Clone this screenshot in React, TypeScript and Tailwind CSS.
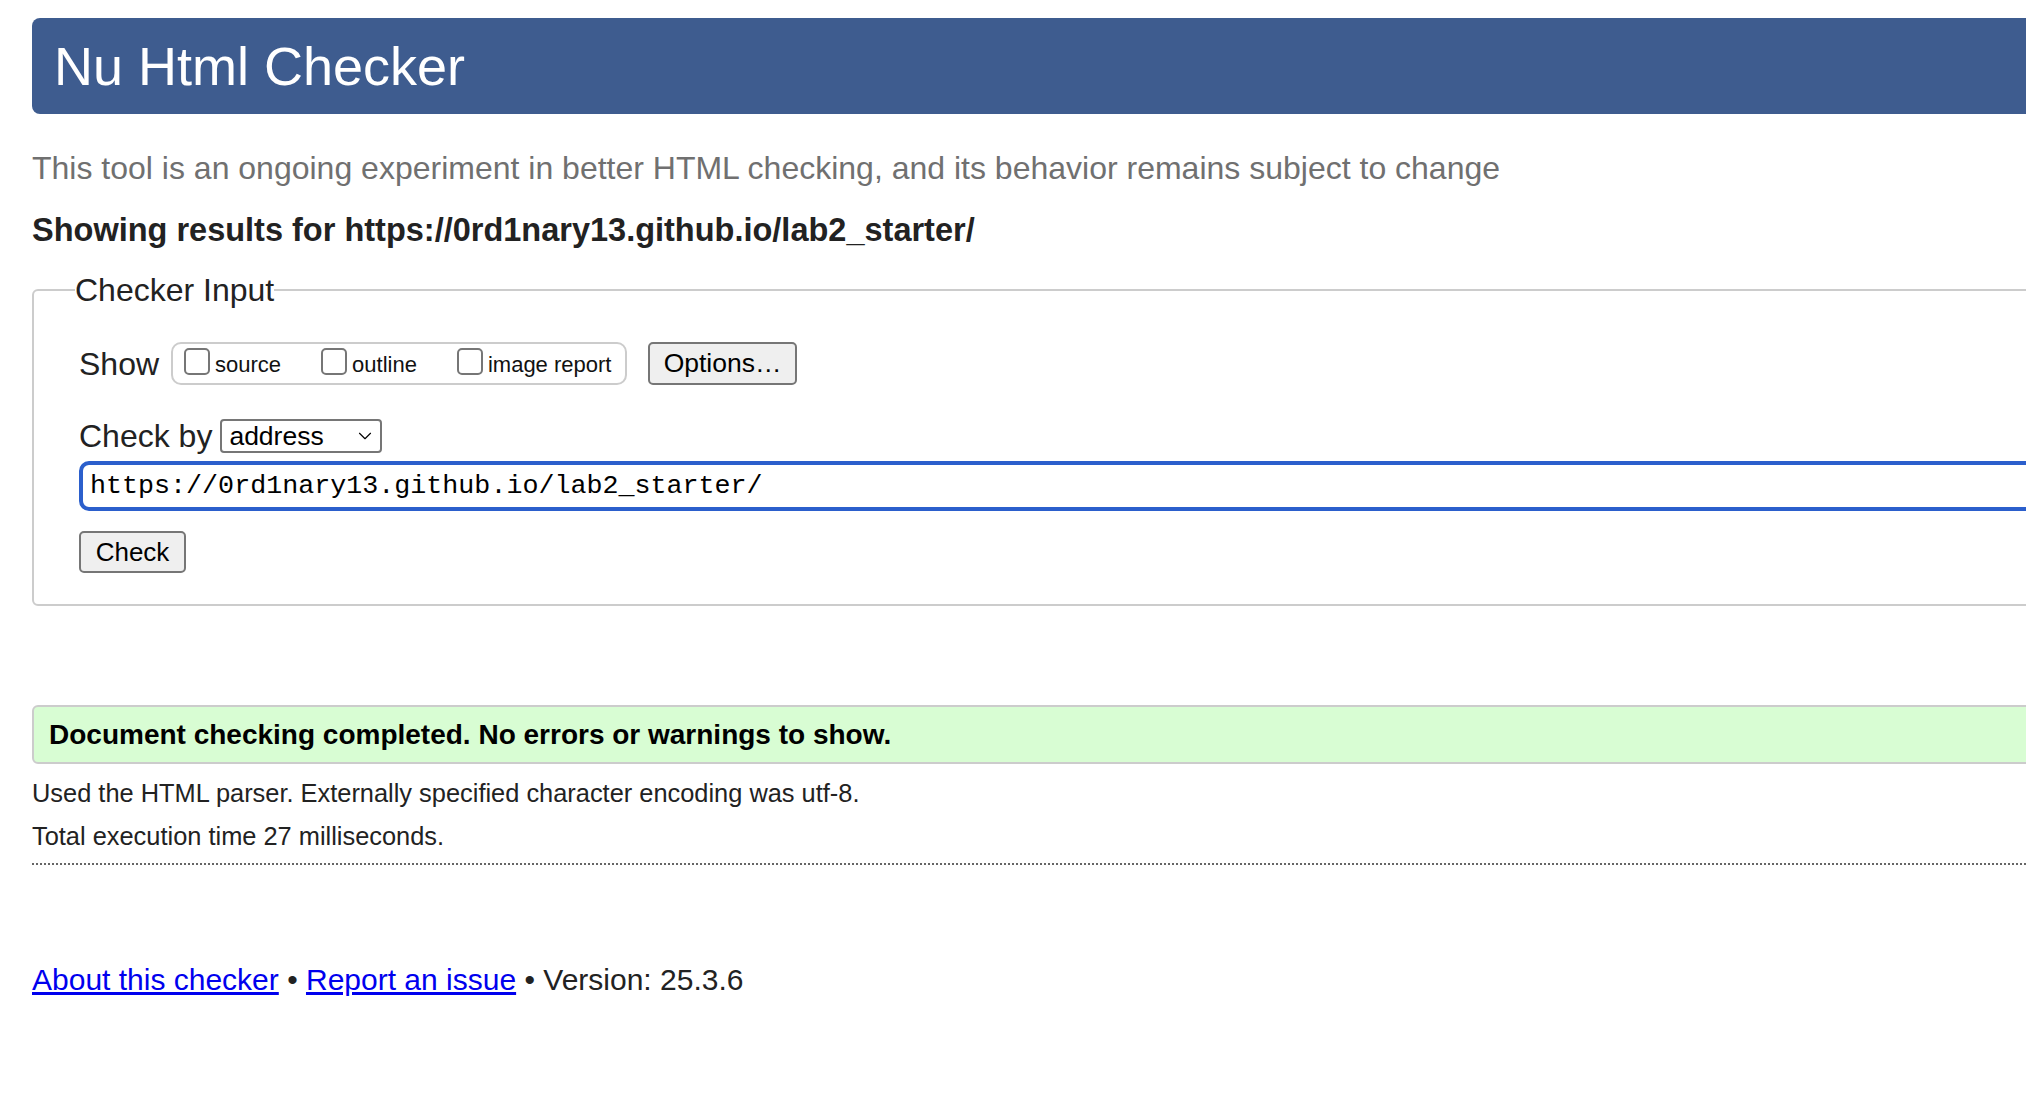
import { ChevronDown } from 'lucide-react';

const SANS = "font-['Liberation_Sans',Arial,Helvetica,sans-serif]";

function Box({ label }: { label: string }) {
  return (
    <label className="flex items-center gap-[5px]">
      <input
        type="checkbox"
        className="appearance-none w-[26px] h-[27px] rounded-[5px] border-2 border-[#767676] bg-white -mt-[5px]"
      />
      <span className="text-[22px] leading-[26px] text-[#111] mt-[3px]">{label}</span>
    </label>
  );
}

export default function App() {
  return (
    <div className={`min-h-screen bg-white overflow-hidden text-[#222] ${SANS}`}>
      <div className="pl-[32px] mr-[-80px] pt-[18px]">
        {/* Title bar */}
        <div className="h-[96px] rounded-l-[8px] bg-[#3e5c8f] flex items-center pl-[22px]">
          <h1 className="text-[54px] leading-none text-white font-normal">Nu Html Checker</h1>
        </div>

        <p className="mt-[36px] text-[32px] leading-[36px] text-[#707070]">
          This tool is an ongoing experiment in better HTML checking, and its behavior remains subject to change
        </p>

        <p className="mt-[26px] text-[32.5px] leading-[36px] font-bold text-[#222]">
          Showing results for https://0rd1nary13.github.io/lab2_starter/
        </p>

        {/* Checker input */}
        <fieldset className="mt-[24px] border-2 border-[#cccccc] rounded-l-[6px] pl-[45px] pb-[31px]">
          <legend className="text-[32px] leading-[36px] -ml-[4px] px-0 text-[#222]">Checker Input</legend>

          <div className="mt-[34px] flex items-center h-[43px]">
            <span className="text-[32px] leading-[36px] mr-[12px]">Show</span>
            <div className="h-[43px] w-[456px] border-2 border-[#cccccc] rounded-[10px] flex items-center pl-[11px] gap-[40px]">
              <Box label="source" />
              <Box label="outline" />
              <Box label="image report" />
            </div>
            <button
              type="button"
              className="ml-[21px] h-[43px] w-[149px] bg-[#efefef] border-2 border-[#767676] rounded-[5px] text-[26.5px] leading-none text-black"
            >
              Options…
            </button>
          </div>

          <div className="mt-[34px] flex items-center h-[34px]">
            <span className="text-[32px] leading-[36px] mr-[8px]">Check by</span>
            <div className="relative">
              <select className="appearance-none h-[34px] w-[162px] border-2 border-[#767676] rounded-[4px] bg-white pl-[7px] text-[26.5px] leading-none text-black">
                <option>address</option>
              </select>
              <ChevronDown className="absolute right-[6px] top-[6px] w-[22px] h-[22px] text-black pointer-events-none" strokeWidth={1.25} />
            </div>
          </div>

          <input
            type="text"
            readOnly
            value="https://0rd1nary13.github.io/lab2_starter/"
            className="mt-[8px] block w-full h-[50px] border-[4px] border-[#2b5fcc] rounded-l-[10px] pl-[7px] font-['Liberation_Mono','DejaVu_Sans_Mono',monospace] text-[26.7px] text-black outline-none"
          />

          <button
            type="button"
            className="mt-[20px] block h-[42px] w-[107px] bg-[#efefef] border-2 border-[#767676] rounded-[5px] text-[26px] leading-none text-black"
          >
            Check
          </button>
        </fieldset>

        {/* Result */}
        <div className="mt-[99px] h-[59px] border-2 border-[#cccccc] rounded-l-[6px] bg-[#d8fdd3] flex items-center pl-[15px]">
          <p className="text-[28px] leading-none font-bold text-black">
            Document checking completed. No errors or warnings to show.
          </p>
        </div>

        <p className="mt-[13px] text-[25.4px] leading-[32px] text-[#222]">
          Used the HTML parser. Externally specified character encoding was utf‑8.
        </p>
        <p className="mt-[11px] text-[25.4px] leading-[32px] text-[#222]">Total execution time 27 milliseconds.</p>
        <div className="mt-[11px] border-b-2 border-dotted border-[#666]" />

        {/* Footer */}
        <p className="mt-[97px] text-[30px] leading-[36px] text-[#222]">
          <a href="#" className="text-[#0000ee] underline">About this checker</a>
          {' • '}
          <a href="#" className="text-[#0000ee] underline">Report an issue</a>
          {' • Version: 25.3.6'}
        </p>
      </div>
    </div>
  );
}
